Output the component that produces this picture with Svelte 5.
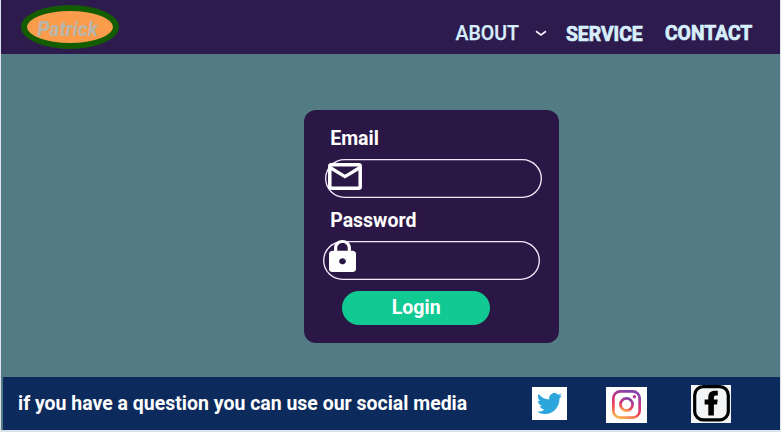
<script>
  const links = [
    { label: 'ABOUT', kind: 'about', menu: true },
    { label: 'SERVICE', kind: 'service' },
    { label: 'CONTACT', kind: 'contact' }
  ];
</script>

<div class="page">
  <header>
    <div class="logo"><span>Patrick</span></div>
    <nav>
      {#each links as link}
        <a class={link.kind}>{link.label}</a>
        {#if link.menu}
          <svg class="chevron" viewBox="0 0 12 7"><path d="M1 1.2 L6 5 L11 1.2" fill="none" stroke="#f4eefc" stroke-width="1.7" /></svg>
        {/if}
      {/each}
    </nav>
  </header>

  <main>
    <form class="card">
      <label for="email">Email</label>
      <div class="field email" id="email">
        <svg viewBox="0 0 34 27">
          <rect x="1.8" y="1.8" width="30.400" height="23.400" rx="1.500" fill="none" stroke="#fff" stroke-width="3.500" />
          <path d="M2 4.500 L17 13.600 L32 4.500" fill="none" stroke="#fff" stroke-width="3.400" />
        </svg>
      </div>
      <label for="password">Password</label>
      <div class="field password" id="password">
        <svg viewBox="4 1 16 21" preserveAspectRatio="none"><path fill="#fff" d="M18 8h-1V6c0-2.760-2.240-5-5-5S7 3.240 7 6v2H6c-1.100 0-2 .9-2 2v10c0 1.100.9 2 2 2h12c1.100 0 2-.9 2-2V10c0-1.100-.9-2-2-2zm-6 9c-1.100 0-2-.9-2-2s.9-2 2-2 2 .9 2 2-.9 2-2 2zm3.100-9H8.900V6c0-1.710 1.390-3.100 3.100-3.100s3.100 1.390 3.100 3.100v2z" /></svg>
      </div>
      <button type="button"><span>Login</span></button>
    </form>
  </main>

  <footer>
    <p>if you have a question you can use our social media</p>
    <div class="tile twitter">
      <svg viewBox="0 2.200 24 19.500" preserveAspectRatio="none"><path fill="#2ca5dc" d="M23.953 4.570a10 10 0 01-2.825.775 4.958 4.958 0 002.163-2.723c-.951.555-2.005.959-3.127 1.184a4.920 4.920 0 00-8.384 4.482C7.690 8.095 4.067 6.130 1.640 3.162a4.822 4.822 0 00-.666 2.475c0 1.710.87 3.213 2.188 4.096a4.904 4.904 0 01-2.228-.616v.060a4.923 4.923 0 003.946 4.827 4.996 4.996 0 01-2.212.085 4.936 4.936 0 004.604 3.417 9.867 9.867 0 01-6.102 2.105c-.39 0-.779-.023-1.170-.067a13.995 13.995 0 007.557 2.209c9.053 0 13.998-7.496 13.998-13.985 0-.21 0-.42-.015-.63A9.935 9.935 0 0024 4.590z" /></svg>
    </div>
    <div class="tile instagram">
      <svg viewBox="0 0 29 29">
        <defs>
          <linearGradient id="ig" x1="0.250" y1="1" x2="0.600" y2="0">
            <stop offset="0" stop-color="#fbb04f" />
            <stop offset="0.300" stop-color="#ed4d55" />
            <stop offset="0.620" stop-color="#cc347f" />
            <stop offset="1" stop-color="#8542a8" />
          </linearGradient>
        </defs>
        <g fill="none" stroke="url(#ig)" stroke-width="2.700">
          <rect x="1.350" y="1.350" width="26.300" height="26.300" rx="7" />
          <circle cx="14.500" cy="14.500" r="6.100" />
        </g>
        <circle cx="22.400" cy="6.800" r="1.700" fill="#b8359b" />
      </svg>
    </div>
    <div class="tile facebook">
      <svg viewBox="0 0 37 37">
        <rect x="1.700" y="1.700" width="33.600" height="33.200" rx="8.500" fill="#f3f4f6" stroke="#000" stroke-width="3.200" />
        <path d="M15.300 30.500V19.500H11.600V14.500H15.300V12C15.300 8 18 5.800 21.400 5.800H24.800V10.500H22.900C21.300 10.500 20.900 11.300 20.900 12.700V14.500H24.700L24.100 19.500H20.900V30.500Z" />
      </svg>
    </div>
  </footer>
</div>

<style>
  .page {
    box-sizing: border-box;
    width: 781px;
    height: 432px;
    padding: 0 1px 2px 1px;
    background: #dce3ec;
    font-family: Roboto, "Liberation Sans", sans-serif;
    display: flex;
    flex-direction: column;
    overflow: hidden;
  }
  header {
    height: 54px;
    background: #2e1b4e;
    display: flex;
    justify-content: space-between;
    flex: none;
  }
  .logo {
    box-sizing: border-box;
    width: 98px;
    height: 44px;
    margin: 5px 0 0 20px;
    border: 6px solid #145c02;
    border-radius: 50%;
    background: #fa9c4b;
    display: flex;
    justify-content: center;
  }
  .logo span {
    color: #b7b6ac;
    font: italic 700 19.500px/38px Roboto, sans-serif;
    margin-left: -5px;
  }
  nav {
    display: flex;
    align-items: flex-start;
    color: #d7effc;
    font-size: 19.300px;
    line-height: 24px;
    white-space: nowrap;
  }
  .about { font-weight: 500; width: 79.500px; margin-top: 22px; -webkit-text-stroke: 0.250px #d7effc; font-size: 19.500px; }
  .chevron { width: 12px; height: 7px; margin: 30px 19.500px 0 -0.500px; }
  .service, .contact { font-weight: 700; -webkit-text-stroke: 0.700px #d7effc; }
  .service { width: 99px; margin-top: 22.500px; }
  .contact { width: 115px; margin-top: 21.500px; }
  main {
    flex: 1;
    background: #527b83;
    min-height: 0;
  }
  .card {
    box-sizing: border-box;
    width: 255px;
    height: 232.500px;
    margin: 56px 0 0 302.700px;
    padding: 17px 0 0 19px;
    border-radius: 12px;
    background: #2b1745;
    display: flex;
    flex-direction: column;
    align-items: flex-start;
  }
  label {
    color: #fff;
    font-size: 19.500px;
    font-weight: 700;
    line-height: 24px;
    margin-left: 7.500px;
  }
  .field {
    box-sizing: border-box;
    width: 217px;
    height: 39px;
    border-radius: 20px;
    box-shadow: inset 0 0 0 1.350px #f3e9fa;
    padding: 1px;
    flex: none;
  }
  .field svg { display: block; }
  .email { margin: 8px 0 11px 2px; }
  .email svg { width: 34px; height: 27px; margin: 3px 0 0 2.500px; }
  .password { margin: 8px 0 11px 0; height: 38.500px; }
  .password svg { width: 27px; height: 32px; margin: -2px 0 0 5px; }
  button {
    width: 148px;
    height: 34px;
    margin-left: 19.500px;
    padding: 0;
    border: 0;
    border-radius: 17px;
    background: #11ca93;
    color: #fff;
    font: 700 19.500px/34px Roboto, sans-serif;
    flex: none;
  }
  footer {
    height: 53px;
    border-left: 2px solid #527b83;
    background: #0c2b5c;
    display: flex;
    align-items: flex-start;
    flex: none;
  }
  footer p {
    width: 514px;
    margin: 15px 0 0 15px;
    color: #fff;
    font-size: 19.480px;
    font-weight: 700;
    line-height: 24px;
    white-space: nowrap;
    flex: none;
  }
  .tile { background: #fff; flex: none; }
  .tile svg { display: block; }
  .twitter { box-sizing: border-box; width: 35px; height: 33px; margin-top: 9.500px; padding: 6px 0 0 5px; }
  .twitter svg { width: 25px; height: 21px; }
  .instagram { box-sizing: border-box; width: 41px; height: 36px; margin: 9.500px 44px 0 39px; padding: 3px 0 0 6px; }
  .instagram svg { width: 29px; height: 29px; }
  .facebook { width: 40px; height: 37.500px; margin-top: 8px; background: #f3f4f6; }
  .facebook svg { width: 37px; height: 37px; margin-left: 1.500px; }
</style>
